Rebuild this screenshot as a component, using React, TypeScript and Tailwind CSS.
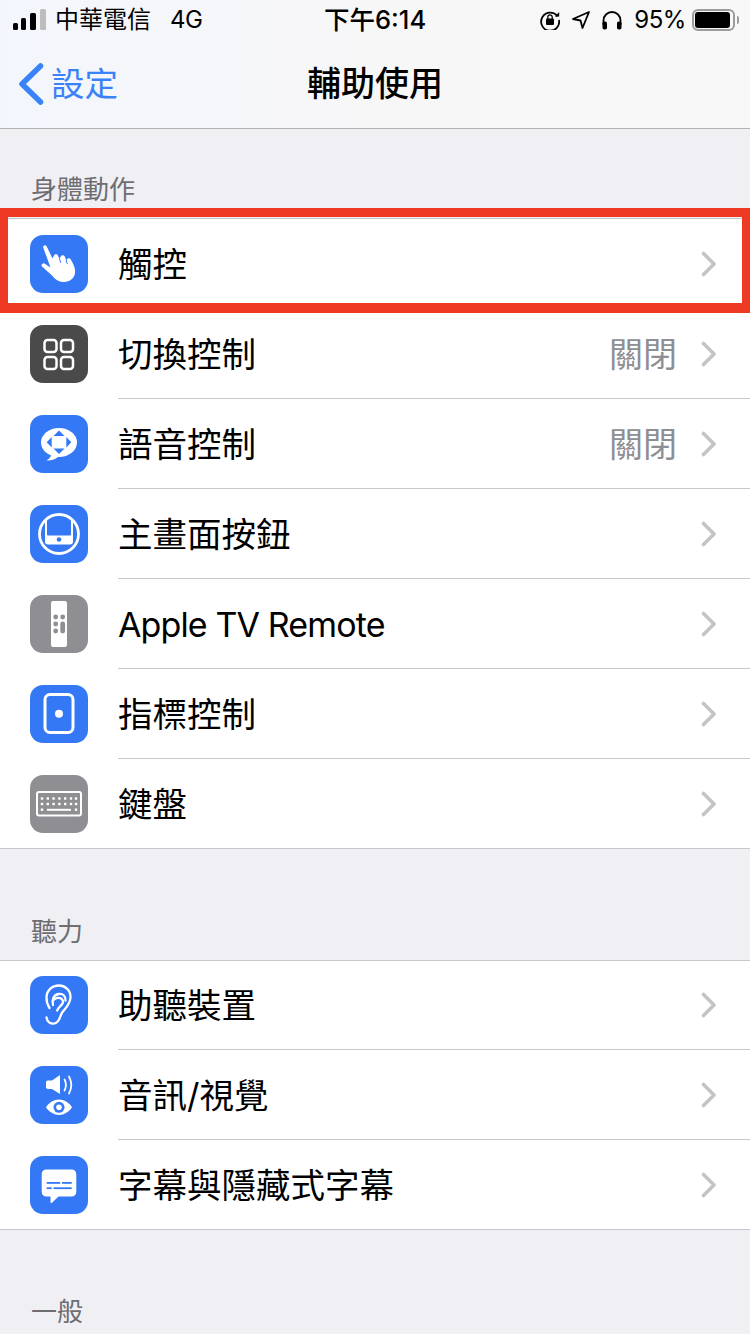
import type { ReactNode } from "react";

function Tile({ bg, children }: { bg: string; children: ReactNode }) {
  return (
    <div className={`w-[58px] h-[58px] rounded-[13px] shrink-0 ${bg}`}>
      <svg viewBox="0 0 58 58" className="w-[58px] h-[58px] block">
        {children}
      </svg>
    </div>
  );
}

const BLUE = "#3478f6";
const GRAY = "#8e8e93";

const HandIcon = (
  <Tile bg="bg-[#3478f6]">
    <path
      d="M13.200 12.500C12.800 10.300 15.600 9.300 16.700 11.500L22.500 23.500L24 20.500C25 18.500 27.500 18.800 28 20.800L29.500 24L31 21C32 19.500 34.500 20 35 22L36.200 25.500L37.500 23.800C38.800 22.800 40.500 23.500 41 25C43.500 29 45.500 33 45 38C44.500 43 39.500 47.500 33 47C27.500 46.500 24.500 43.500 22 40.500L12 31.500C10.500 30 12.800 27.500 14.500 28.500L20.500 32.500Z"
      fill="#fff"
    />
    <g stroke={BLUE} strokeWidth="1" strokeLinecap="round">
      <path d="M29.500 24l1.200 3.500" />
      <path d="M36.200 25.500l1 3" />
    </g>
  </Tile>
);

const GridIcon = (
  <Tile bg="bg-[#4a4a4a]">
    <g fill="none" stroke="#fff" strokeWidth="2.500">
      <rect x="14.500" y="15" width="12" height="12" rx="3" />
      <rect x="31" y="15" width="12" height="12" rx="3" />
      <rect x="14.500" y="32" width="12" height="12" rx="3" />
      <rect x="31" y="32" width="12" height="12" rx="3" />
    </g>
  </Tile>
);

const VoiceIcon = (
  <Tile bg="bg-[#3478f6]">
    <ellipse cx="29" cy="27.500" rx="18" ry="14.500" fill="#fff" />
    <path d="M22 38c-.5 3-2.500 6-5.500 7.500 4.500.3 9-1 12-4z" fill="#fff" />
    <g fill={BLUE}>
      <path d="M29 15.500l5.500 5.500h-11z" />
      <path d="M29 39l5.500-5.500h-11z" />
      <path d="M16.700 27.300l5-5.300v10.600z" />
      <path d="M41.300 27.300l-5-5.300v10.600z" />
    </g>
  </Tile>
);

const HomeIcon = (
  <Tile bg="bg-[#3478f6]">
    <defs>
      <clipPath id="home-clip">
        <circle cx="29" cy="29" r="20" />
      </clipPath>
    </defs>
    <g clipPath="url(#home-clip)">
      <rect x="15" y="6" width="28" height="33.500" rx="3" fill="#fff" />
      <rect x="17" y="6" width="24" height="24.500" rx="1" fill={BLUE} />
    </g>
    <circle cx="29" cy="34.500" r="2.300" fill={BLUE} />
    <circle cx="29" cy="29" r="19.500" fill="none" stroke="#fff" strokeWidth="2.800" />
  </Tile>
);

const RemoteIcon = (
  <Tile bg="bg-[#8e8e93]">
    <rect x="21" y="6" width="16" height="46" rx="2" fill="#fff" />
    <g fill={GRAY}>
      <circle cx="25.700" cy="22" r="2.400" />
      <circle cx="32.700" cy="22" r="2.400" />
      <circle cx="25.700" cy="29" r="2.400" />
      <circle cx="25.700" cy="36" r="2.400" />
      <rect x="30.300" y="26.500" width="4.800" height="12" rx="2.400" />
    </g>
  </Tile>
);

const PointerIcon = (
  <Tile bg="bg-[#3478f6]">
    <rect x="15" y="9.500" width="28" height="38" rx="5" fill="none" stroke="#fff" strokeWidth="3" />
    <circle cx="29" cy="28.700" r="4" fill="#fff" />
  </Tile>
);

const keyRows = [23.500, 29];
const keyXs = [12, 17.800, 23.600, 29.400, 35.200, 41, 46];

const KeyboardIcon = (
  <Tile bg="bg-[#8e8e93]">
    <rect x="7" y="17" width="44" height="23.500" rx="2" fill="none" stroke="#fff" strokeWidth="2" />
    <g fill="#fff">
      {keyRows.map((y) =>
        keyXs.map((x) => <rect key={`${x}-${y}`} x={x - 1.200} y={y - 1.200} width="2.400" height="2.400" />)
      )}
      <rect x="10.800" y="33.500" width="2.400" height="2.400" />
      <rect x="17" y="33.800" width="24" height="2" />
      <rect x="44.800" y="33.500" width="2.400" height="2.400" />
    </g>
  </Tile>
);

const EarIcon = (
  <Tile bg="bg-[#3478f6]">
    <g fill="none" stroke="#fff" strokeWidth="2.300" strokeLinecap="round" strokeLinejoin="round">
      <path d="M16.500 41.500c.5 4 4 7 8 6 5.500-1.300 5-7.500 8-11.500 3-4 8-8 8-15C40.500 14 35 9.500 29 9.500c-7 0-12.500 5-12.500 12 0 4 1 7.500 3 10.500" />
      <path d="M23 29c-1.500-5 .5-10 5.500-11 4.500-.8 7.500 2.500 7 6.500" />
      <path d="M23.500 24c3-3.500 8.500-2.500 9.500 1 .5 2.500-1.500 4-3 5.500-1.300 1.300-2.200 2.500-2.800 4" />
    </g>
  </Tile>
);

const SoundIcon = (
  <Tile bg="bg-[#3478f6]">
    <path d="M18 14.500h4l8-5.500v19l-8-5h-4c-1.300 0-2-.7-2-2v-4.500c0-1.300.7-2 2-2z" fill="#fff" />
    <g fill="none" stroke="#fff" strokeWidth="1.800" strokeLinecap="round">
      <path d="M34.500 13.500c1.800 3.500 1.800 7.500 0 11" />
      <path d="M39 10.500c3 5.500 3 11.500 0 17" />
    </g>
    <path d="M16 41.300C19 36.500 24 33.500 29 33.500s10 3 13 7.800C39 46 34 49 29 49s-10-3-13-7.700z" fill="#fff" />
    <circle cx="29" cy="41.300" r="5.500" fill={BLUE} />
    <circle cx="29" cy="41.300" r="2.800" fill="#fff" />
  </Tile>
);

const CaptionIcon = (
  <Tile bg="bg-[#3478f6]">
    <path d="M16.500 13.500h25c3 0 4.800 1.800 4.800 4.800v17.400c0 3-1.800 4.800-4.800 4.800H28.500l-6.500 6.300c-.8.600-1.500.2-1.500-.8v-5.500h-4c-3 0-4.800-1.800-4.800-4.800V18.300c0-3 1.800-4.800 4.800-4.800z" fill="#fff" />
    <g fill={BLUE}>
      <rect x="16.700" y="26" width="13.500" height="1.800" />
      <rect x="32" y="26" width="9.700" height="1.800" />
      <rect x="16.700" y="31.300" width="5" height="1.800" />
      <rect x="23.500" y="31.300" width="18.200" height="1.800" />
    </g>
  </Tile>
);

type RowProps = {
  icon: ReactNode;
  label: string;
  value?: string;
  last?: boolean;
  first?: boolean;
  latin?: boolean;
};

function Row({ icon, label, value, last, first, latin }: RowProps) {
  return (
    <div className={`flex items-start pl-[30px] ${last || first ? "h-[89px]" : "h-[90px]"}`}>
      <div className={first ? "pt-[15px]" : "pt-4"}>{icon}</div>
      <div className={`ml-[30px] flex-1 flex items-center h-full pr-[33px] ${last ? "" : "border-b border-[#c8c7cc]"}`}>
        <span className={`flex-1 mt-[2px] leading-[44px] text-black ${latin ? "text-[34px] tracking-[-0.87px]" : "text-[34.500px]"}`}>
          {label}
        </span>
        {value && <span className="mt-[2px] text-[34px] leading-[44px] text-[#8e8e93] mr-6">{value}</span>}
        <svg width="16" height="26" viewBox="0 0 16 26" fill="none" className="block">
          <path d="M2.500 2.500L13 13 2.500 23.500" stroke="#c4c4c7" strokeWidth="3.600" strokeLinecap="round" strokeLinejoin="round" />
        </svg>
      </div>
    </div>
  );
}

function SectionLabel({ text, height }: { text: string; height: string }) {
  return (
    <div className={`flex items-end pl-[31px] pb-[10px] ${height}`}>
      <span className="text-[26px] leading-9 text-[#6d6d72]">{text}</span>
    </div>
  );
}

function StatusBar() {
  return (
    <div className="h-10 flex items-center relative text-black">
      <div className="flex items-end gap-[3px] pl-[13px] h-[21px] mt-[-1px]">
        <div className="w-[5px] h-[7px] rounded-[1.500px] bg-black" />
        <div className="w-[5px] h-[12px] rounded-[1.500px] bg-black" />
        <div className="w-[6px] h-[17px] rounded-[1.500px] bg-black ml-[1px]" />
        <div className="w-[6px] h-[21px] rounded-[1.500px] bg-[#bdbdbd] ml-[1px]" />
      </div>
      <span className="ml-[9px] text-[24px] leading-none">中華電信</span>
      <span className="ml-[19px] text-[24px] leading-none tracking-[-0.5px]">4G</span>
      <span className="absolute left-[324px] top-[4px] text-[25.500px] leading-8 font-medium">下午6:14</span>
      <div className="ml-auto flex items-center pr-[11px]">
        {/* rotation lock */}
        <svg width="20" height="20" viewBox="0 0 20 20" fill="none" className="mr-3">
          <path d="M17.500 6.500A9 9 0 1 0 19 10" stroke="#000" strokeWidth="1.800" />
          <path d="M14.800 6.500h4.400V2z" fill="#000" />
          <rect x="6" y="8.500" width="8" height="6.500" rx="1" fill="#000" />
          <path d="M7.800 9V7a2.200 2.200 0 0 1 4.400 0v2" stroke="#000" strokeWidth="1.300" />
        </svg>
        <svg width="18" height="18" viewBox="0 0 18 18" className="mr-3">
          <path d="M17 1L1 8l7.500 1.500L10.500 17z" fill="none" stroke="#000" strokeWidth="1.800" strokeLinejoin="round" />
        </svg>
        <svg width="20" height="19" viewBox="0 0 20 19" fill="none" className="mr-3">
          <path d="M1.500 14V9.500a8.500 8.500 0 0 1 17 0V14" stroke="#000" strokeWidth="1.800" />
          <rect x="0.500" y="10.500" width="4.500" height="8" rx="1.800" fill="#000" />
          <rect x="15" y="10.500" width="4.500" height="8" rx="1.800" fill="#000" />
        </svg>
        <span className="text-[24px] leading-none tracking-[-0.4px] mr-[6px]">95%</span>
        <div className="w-[43px] h-[22px] rounded-[6px] border-2 border-[#9c9c9c] p-px">
          <div className="w-[35px] h-full rounded-[3px] bg-black" />
        </div>
        <div className="w-[2px] h-[8px] rounded-r-[2px] bg-[#9c9c9c] ml-[2px]" />
      </div>
    </div>
  );
}

export default function App() {
  return (
    <div className="w-[750px] h-[1334px] relative overflow-hidden bg-[#efeff4] font-['Inter','Noto_Sans_CJK_TC',sans-serif]">
      <header className="h-[129px] bg-linear-to-r from-[#f3f6fc] via-[#f7f7f8] to-[#f8f8f8] border-b border-[#b2b2b2]">
        <StatusBar />
        <div className="h-[88px] relative flex items-center justify-center">
          <div className="absolute left-[18px] top-[23px] flex items-center">
            <svg width="26" height="42" viewBox="0 0 26 42" fill="none">
              <path d="M22.500 3L4 21l18.500 18" stroke="#3a82f7" strokeWidth="5.500" strokeLinecap="round" strokeLinejoin="round" />
            </svg>
            <span className="ml-[7px] text-[33.500px] leading-[42px] text-[#3a82f7]">設定</span>
          </div>
          <span className="text-[34px] leading-[44px] font-medium text-black">輔助使用</span>
        </div>
      </header>

      <SectionLabel text="身體動作" height="h-[89px]" />
      <div className="bg-white border-t border-b border-[#c8c7cc]">
        <Row icon={HandIcon} label="觸控" />
        <Row icon={GridIcon} label="切換控制" value="關閉" />
        <Row icon={VoiceIcon} label="語音控制" value="關閉" />
        <Row icon={HomeIcon} label="主畫面按鈕" />
        <Row icon={RemoteIcon} label="Apple TV Remote" latin />
        <Row icon={PointerIcon} label="指標控制" />
        <Row icon={KeyboardIcon} label="鍵盤" last />
      </div>

      <SectionLabel text="聽力" height="h-[111px]" />
      <div className="bg-white border-t border-b border-[#c8c7cc]">
        <Row icon={EarIcon} label="助聽裝置" first />
        <Row icon={SoundIcon} label="音訊/視覺" />
        <Row icon={CaptionIcon} label="字幕與隱藏式字幕" last />
      </div>

      <SectionLabel text="一般" height="h-[110px]" />

      {/* red highlight around the first row */}
      <div className="absolute left-0 top-[208px] w-[750px] h-[105px] border-x-8 border-t-[9px] border-b-[10px] border-[#ee3a24]" />
    </div>
  );
}
